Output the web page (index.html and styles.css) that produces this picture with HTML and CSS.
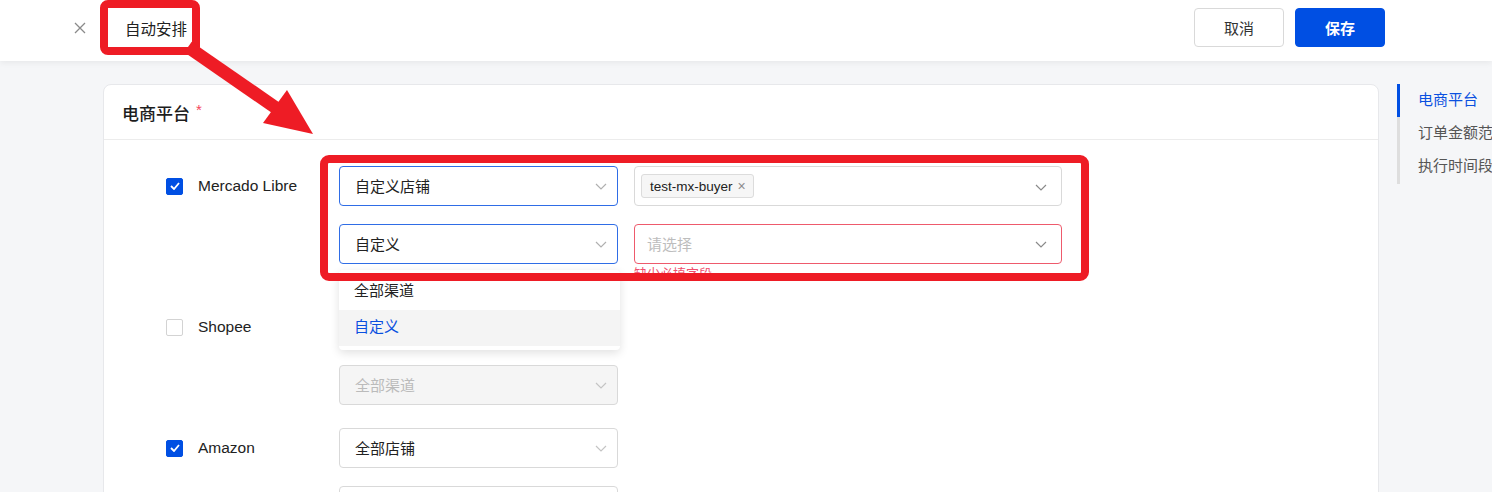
FILE: index.html
```html
<!DOCTYPE html>
<html lang="zh-CN">

<head>
    <meta charset="utf-8" />
    <title>自动安排</title>
    <link rel="stylesheet" href="styles.css">
</head>

<body>
    <header class="Topbar">
        <div class="TopbarLeft">
            <span class="Close">
                <svg width="12" height="12" viewBox="0 0 12 12"><path d="M1 1 L11 11 M11 1 L1 11" stroke="#8a8a8a" stroke-width="1.3" fill="none" /></svg>
            </span>
            <span class="Title">自动安排</span>
        </div>
        <div class="Actions">
            <button class="Btn">取消</button>
            <button class="Btn BtnPrimary">保存</button>
        </div>
    </header>

    <main class="Page">
        <section class="Card">
            <div class="CardHead">电商平台<span class="Req">*</span></div>
            <div class="CardBody">

                <div class="Platform">
                    <div class="CheckCell">
                        <span class="Checkbox Checked">
                            <svg width="10" height="8" viewBox="0 0 10 8"><path d="M1 4 L4 7 L9 1" stroke="#fff" stroke-width="1.8" fill="none" /></svg>
                        </span>
                        <span class="Name">Mercado Libre</span>
                    </div>
                    <div class="Fields">
                        <div class="Line">
                            <div class="Select Short Focus">
                                <span class="Value">自定义店铺</span>
                                <span class="Arrow"><svg width="12" height="7" viewBox="0 0 12 7"><path d="M1 1 L6 6 L11 1" stroke="#b0b0b0" stroke-width="1.2" fill="none" /></svg></span>
                            </div>
                            <div class="Select Long TagSelect">
                                <span class="Tag">test-mx-buyer<span class="TagX">×</span></span>
                                <span class="Arrow"><svg width="12" height="7" viewBox="0 0 12 7"><path d="M1 1 L6 6 L11 1" stroke="#8a8a8a" stroke-width="1.2" fill="none" /></svg></span>
                            </div>
                        </div>
                        <div class="Line">
                            <div class="SelectWrap">
                                <div class="Select Short Focus">
                                    <span class="Value">自定义</span>
                                    <span class="Arrow"><svg width="12" height="7" viewBox="0 0 12 7"><path d="M1 1 L6 6 L11 1" stroke="#b0b0b0" stroke-width="1.2" fill="none" /></svg></span>
                                </div>
                                <ul class="Dropdown">
                                    <li>全部渠道</li>
                                    <li class="Active">自定义</li>
                                </ul>
                            </div>
                            <div class="LongWrap">
                                <div class="Select Long Invalid">
                                    <span class="Placeholder">请选择</span>
                                    <span class="Arrow"><svg width="12" height="7" viewBox="0 0 12 7"><path d="M1 1 L6 6 L11 1" stroke="#8a8a8a" stroke-width="1.2" fill="none" /></svg></span>
                                </div>
                                <div class="ErrorMsg">缺少必填字段</div>
                            </div>
                        </div>
                    </div>
                </div>

                <div class="Platform">
                    <div class="CheckCell">
                        <span class="Checkbox"></span>
                        <span class="Name">Shopee</span>
                    </div>
                    <div class="Fields">
                        <div class="Line">
                            <div class="Select Short Disabled">
                                <span class="Value">全部店铺</span>
                                <span class="Arrow"><svg width="12" height="7" viewBox="0 0 12 7"><path d="M1 1 L6 6 L11 1" stroke="#c4c4c4" stroke-width="1.2" fill="none" /></svg></span>
                            </div>
                        </div>
                        <div class="Line">
                            <div class="Select Short Disabled">
                                <span class="Value">全部渠道</span>
                                <span class="Arrow"><svg width="12" height="7" viewBox="0 0 12 7"><path d="M1 1 L6 6 L11 1" stroke="#c4c4c4" stroke-width="1.2" fill="none" /></svg></span>
                            </div>
                        </div>
                    </div>
                </div>

                <div class="Platform">
                    <div class="CheckCell">
                        <span class="Checkbox Checked">
                            <svg width="10" height="8" viewBox="0 0 10 8"><path d="M1 4 L4 7 L9 1" stroke="#fff" stroke-width="1.8" fill="none" /></svg>
                        </span>
                        <span class="Name">Amazon</span>
                    </div>
                    <div class="Fields">
                        <div class="Line">
                            <div class="Select Short">
                                <span class="Value">全部店铺</span>
                                <span class="Arrow"><svg width="12" height="7" viewBox="0 0 12 7"><path d="M1 1 L6 6 L11 1" stroke="#c4c4c4" stroke-width="1.2" fill="none" /></svg></span>
                            </div>
                        </div>
                        <div class="Line">
                            <div class="Select Short">
                                <span class="Value">全部渠道</span>
                                <span class="Arrow"><svg width="12" height="7" viewBox="0 0 12 7"><path d="M1 1 L6 6 L11 1" stroke="#c4c4c4" stroke-width="1.2" fill="none" /></svg></span>
                            </div>
                        </div>
                    </div>
                </div>

            </div>
        </section>

        <nav class="Anchor">
            <a class="AnchorItem Current">电商平台</a>
            <a class="AnchorItem">订单金额范围</a>
            <a class="AnchorItem">执行时间段</a>
        </nav>
    </main>

    <!-- annotation marks drawn over the screenshot -->
    <svg class="Annot" width="1492" height="492" viewBox="0 0 1492 492">
        <rect x="104" y="4" width="92" height="47" rx="4" fill="none" stroke="#ee1c25" stroke-width="8" />
        <rect x="324" y="159" width="761" height="118" rx="5" fill="none" stroke="#ee1c25" stroke-width="8" />
        <line x1="188" y1="47" x2="279" y2="110" stroke="#ee1c25" stroke-width="13" />
        <polygon points="287,90 313,134 263,123" fill="#ee1c25" />
    </svg>
</body>

</html>
```

FILE: styles.css
```css
html,
body {
    margin: 0;
    padding: 0;
    overflow: hidden;
}

body {
    background: #f5f6f8;
    font-family: "Liberation Sans", "Noto Sans CJK SC", sans-serif;
    color: #222222;
    position: relative;
    width: 1492px;
    height: 492px;
}

.Topbar {
    height: 61px;
    background: #ffffff;
    box-shadow: 0 2px 6px rgba(0, 0, 0, 0.06);
    display: flex;
    align-items: center;
    justify-content: space-between;
    padding: 0 107px 0 74px;
    position: relative;
    z-index: 2;
}

.TopbarLeft {
    display: flex;
    align-items: center;
}

.Close {
    display: flex;
    width: 12px;
    height: 12px;
    margin-top: -6px;
}

.Title {
    margin-left: 39px;
    font-size: 15.5px;
    color: #222222;
    margin-top: -6px;
}

.Actions {
    display: flex;
    gap: 11px;
    margin-top: -6px;
}

.Btn {
    width: 90px;
    height: 39px;
    border: 1px solid #d9d9d9;
    border-radius: 4px;
    background: #ffffff;
    font-family: inherit;
    font-size: 15px;
    color: #333333;
    padding: 0;
}

.BtnPrimary {
    background: #004fe3;
    border-color: #004fe3;
    color: #ffffff;
    font-weight: bold;
}

.Page {
    display: flex;
    align-items: flex-start;
    padding: 23px 0 0 103px;
    gap: 18px;
}

.Card {
    width: 1276px;
    flex: none;
    background: #ffffff;
    border: 1px solid #e7e8eb;
    border-radius: 8px;
    box-sizing: border-box;
    height: 500px;
}

.CardHead {
    height: 54px;
    border-bottom: 1px solid #ececec;
    display: flex;
    align-items: center;
    padding-left: 18px;
    font-size: 17px;
    font-weight: 500;
    color: #1d1d1d;
}

.Req {
    color: #f5475b;
    font-size: 15px;
    margin-left: 6px;
    margin-top: -6px;
}

.CardBody {
    padding: 26px 0 0 62px;
}

.Platform {
    display: flex;
    margin-bottom: 23px;
}

.CheckCell {
    width: 173px;
    height: 40px;
    display: flex;
    align-items: center;
    flex: none;
}

.Checkbox {
    width: 17px;
    height: 17px;
    box-sizing: border-box;
    border: 1px solid #d3d3d3;
    border-radius: 2px;
    background: #ffffff;
    display: flex;
    align-items: center;
    justify-content: center;
}

.Checkbox.Checked {
    background: #004fe3;
    border-color: #004fe3;
}

.Name {
    margin-left: 15px;
    font-size: 15.5px;
    color: #222222;
    margin-top: -1px;
}

.Fields {
    display: flex;
    flex-direction: column;
    gap: 18px;
}

.Line {
    display: flex;
    gap: 16px;
}

.SelectWrap,
.LongWrap {
    position: relative;
}

.Select {
    height: 40px;
    box-sizing: border-box;
    border: 1px solid #d9d9d9;
    border-radius: 4px;
    background: #ffffff;
    display: flex;
    align-items: center;
    justify-content: space-between;
    padding: 0 10px 2px 15px;
    font-size: 15px;
}

.Short {
    width: 279px;
}

.Long {
    width: 428px;
    padding-left: 12px;
    padding-right: 14px;
}

.TagSelect {
    padding-left: 6px;
    padding-bottom: 0;
}

.Focus {
    border-color: #2f6de6;
}

.Invalid {
    border-color: #ee5a6c;
}

.Disabled {
    background: #f5f5f5;
    color: #bbbbbb;
}

.Arrow {
    display: flex;
    margin-top: 2px;
}

.Placeholder {
    color: #bdbdbd;
}

.Tag {
    height: 24px;
    box-sizing: border-box;
    border: 1px solid #dcdcdc;
    border-radius: 3px;
    background: #f6f6f6;
    display: flex;
    align-items: center;
    padding: 0 7px 0 8px;
    font-size: 13.5px;
    color: #222222;
}

.TagX {
    color: #8c8c8c;
    font-size: 14px;
    margin-left: 5px;
}

.ErrorMsg {
    position: absolute;
    left: 0;
    top: 40px;
    font-size: 13px;
    line-height: 20px;
    color: #f0506e;
}

.Line:has(.ErrorMsg) {
    margin-bottom: 20px;
}

.Dropdown {
    position: absolute;
    left: 0;
    top: 46px;
    width: 281px;
    margin: 0;
    padding: 4px 0;
    list-style: none;
    background: #ffffff;
    border-radius: 4px;
    box-shadow: 0 3px 10px rgba(0, 0, 0, 0.12);
    z-index: 3;
}

.Dropdown li {
    height: 36px;
    line-height: 34px;
    padding-left: 15px;
    font-size: 15px;
    color: #222222;
}

.Dropdown li.Active {
    background: #f4f4f4;
    color: #0a50e0;
}

.Anchor {
    display: flex;
    flex-direction: column;
    border-left: 3px solid #dedede;
    padding: 0 0 1px 0;
    flex: none;
    width: 120px;
}

.AnchorItem {
    display: block;
    height: 33px;
    line-height: 32px;
    padding-left: 18px;
    margin-left: -3px;
    border-left: 3px solid transparent;
    font-size: 15px;
    color: #555555;
    white-space: nowrap;
}

.AnchorItem.Current {
    border-left-color: #004fe3;
    color: #0a50e0;
}

.Annot {
    position: absolute;
    left: 0;
    top: 0;
    z-index: 10;
    pointer-events: none;
}
```
